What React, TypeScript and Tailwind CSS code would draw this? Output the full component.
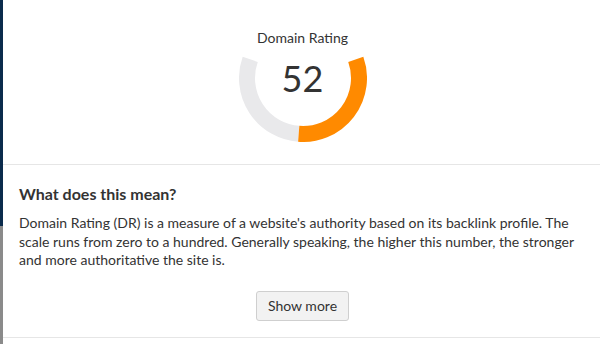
import React from "react";

const VALUE = 52;

// gauge geometry, screen angles (y down); arc runs from top-left round the bottom to top-right
const CX = 64;
const CY = 64;
const R = 56;
const START = 199.5;
const END = -19.5;

function pt(deg: number) {
  const a = (deg * Math.PI) / 180;
  return [CX + R * Math.cos(a), CY + R * Math.sin(a)];
}

function arc(from: number, to: number) {
  const [x1, y1] = pt(from);
  const [x2, y2] = pt(to);
  const large = Math.abs(from - to) > 180 ? 1 : 0;
  // decreasing angle = counter-clockwise on screen
  return `M ${x1} ${y1} A ${R} ${R} 0 ${large} 0 ${x2} ${y2}`;
}

function Gauge({ value }: { value: number }) {
  const span = START - END;
  const split = END + (span * value) / 100;
  return (
    <div className="relative w-[128px] h-[128px]">
      <svg width="128" height="128" viewBox="0 0 128 128" className="absolute inset-0">
        <path d={arc(START, split)} fill="none" stroke="#e9e9eb" strokeWidth="16" />
        <path d={arc(split, END)} fill="none" stroke="#ff8a00" strokeWidth="16" />
      </svg>
      <div className="absolute inset-x-0 top-[46px] text-center text-[36px] leading-[36px] text-[#333]">
        {value}
      </div>
    </div>
  );
}

export default function App() {
  return (
    <div className="flex w-[600px] h-[344px] bg-white font-['Lato','Liberation_Sans',sans-serif] overflow-hidden">
      {/* backdrop showing at left edge */}
      <div className="flex flex-col w-[3px] shrink-0">
        <div className="h-[226px] bg-[#0b2b4c]" />
        <div className="flex-1 bg-[#8a8a8a]" />
      </div>

      <div className="flex-1 flex flex-col">
        <div className="h-[165px] border-b border-[#e6e6e6] flex flex-col items-center pt-[29px]">
          <div className="relative z-10 text-[14px] leading-[18px] text-[#333] ml-[2px]">Domain Rating</div>
          <div className="mt-[-33px] ml-[2px]">
            <Gauge value={VALUE} />
          </div>
        </div>

        <div className="h-[173px] border-b border-[#e6e6e6] pl-[16px] pt-[19px]">
          <h3 className="text-[16px] leading-[20px] font-bold text-[#333]">What does this mean?</h3>
          <p className="mt-[10px] w-[560px] text-[14px] leading-[18.5px] text-[#333]">
            Domain Rating (DR) is a measure of a website's authority based on its backlink profile. The
            scale runs from zero to a hundred. Generally speaking, the higher this number, the stronger
            and more authoritative the site is.
          </p>
          <div className="flex justify-center mt-[21px] w-[565px]">
            <button className="w-[93px] h-[30px] ml-[2px] rounded-[3px] border border-[#cfcfcf] bg-[#f2f2f2] text-[14px] text-[#333]">
              Show more
            </button>
          </div>
        </div>
      </div>
    </div>
  );
}
